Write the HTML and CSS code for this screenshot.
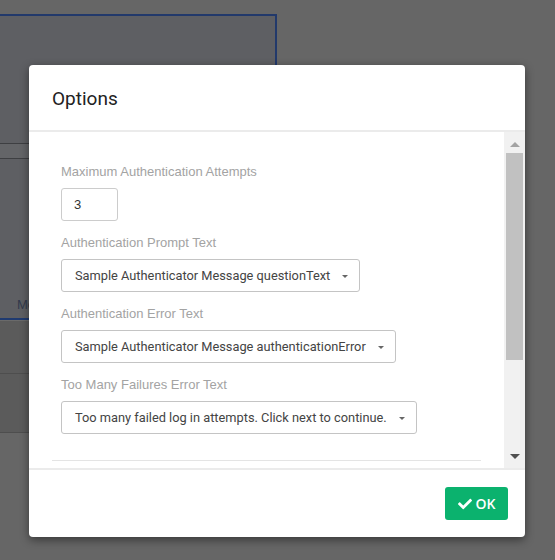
FILE: index.html
```html
<!DOCTYPE html>
<html>
<head>
<meta charset="utf-8">
<link rel="stylesheet" href="styles.css">
</head>
<body>
<div class="page">
  <div class="bg-panel">
    <div class="bg-gap"></div>
    <div class="bg-strip"></div>
    <div class="bg-fill"></div>
    <div class="bg-tab"><span class="bg-tab-label">Mo</span></div>
  </div>
  <div class="bg-rows">
    <div class="bg-row bg-row-a"></div>
    <div class="bg-row bg-row-b"></div>
  </div>
</div>

<div class="modal">
  <div class="modal-header">
    <h4 class="modal-title">Options</h4>
  </div>
  <div class="modal-body">
    <div class="body-content">
      <div class="fields">
        <div class="field">
          <div class="field-label">Maximum Authentication Attempts</div>
          <div class="num-input">3</div>
        </div>
        <div class="field">
          <div class="field-label">Authentication Prompt Text</div>
          <div class="select"><span class="select-text">Sample Authenticator Message questionText</span><span class="caret"></span></div>
        </div>
        <div class="field">
          <div class="field-label">Authentication Error Text</div>
          <div class="select"><span class="select-text">Sample Authenticator Message authenticationError</span><span class="caret"></span></div>
        </div>
        <div class="field">
          <div class="field-label">Too Many Failures Error Text</div>
          <div class="select"><span class="select-text">Too many failed log in attempts. Click next to continue.</span><span class="caret"></span></div>
        </div>
      </div>
      <div class="divider"></div>
    </div>
    <div class="scrollbar">
      <div class="sb-arrow sb-up"></div>
      <div class="sb-track"><div class="sb-thumb"></div></div>
      <div class="sb-arrow sb-down"></div>
    </div>
  </div>
  <div class="modal-footer">
    <button class="btn-ok">
      <svg class="check" viewBox="0 0 512 512" width="14" height="14"><path fill="#fff" d="M173.9 439.4l-166.4-166.4c-10-10-10-26.2 0-36.2l36.2-36.2c10-10 26.2-10 36.2 0L192 312.7 432.1 72.6c10-10 26.2-10 36.2 0l36.2 36.2c10 10 10 26.2 0 36.2L210.1 439.4c-10 10-26.2 10-36.2 0z"/></svg>
      <span>OK</span>
    </button>
  </div>
</div>
</body>
</html>
```

FILE: styles.css
```css
html, body {
  margin: 0;
  padding: 0;
}
body {
  background: #666666;
  width: 555px;
  height: 560px;
  overflow: hidden;
  position: relative;
  font-family: Roboto, "Open Sans", sans-serif;
}

.page {
  padding-top: 14px;
  width: 277px;
}
.bg-panel {
  width: 275px;
  height: 304px;
  background: #5e5f63;
  border-top: 2px solid #22396b;
  border-right: 2px solid #22396b;
  display: flex;
  flex-direction: column;
}
.bg-gap {
  height: 127px;
  border-bottom: 1px solid #3e3f42;
}
.bg-strip {
  height: 14px;
  background: #646568;
  border-bottom: 1px solid #3e3f42;
}
.bg-fill {
  flex: 1;
}
.bg-tab {
  height: 26px;
  border-bottom: 2px solid #1f3a70;
  padding-left: 17px;
  display: flex;
  align-items: center;
}
.bg-tab-label {
  font-family: "Liberation Sans", Arial, sans-serif;
  font-size: 13px;
  color: #333a4c;
  line-height: 16px;
}
.bg-rows {
  display: flex;
  flex-direction: column;
}
.bg-row {
  background: #5b5b5b;
  border-bottom: 1px solid #4e4e4e;
}
.bg-row-a {
  height: 52px;
  border-top: 1px solid #6a6a6a;
}
.bg-row-b {
  height: 58px;
}

.modal {
  position: absolute;
  left: 29px;
  top: 65px;
  width: 496px;
  height: 472px;
  background: #ffffff;
  border-radius: 4px;
  box-shadow: 0 3px 10px rgba(0, 0, 0, 0.45);
  display: flex;
  flex-direction: column;
  overflow: hidden;
}
.modal-header {
  height: 65px;
  border-bottom: 2px solid #ebebeb;
  padding-left: 23px;
  display: flex;
  align-items: center;
}
.modal-title {
  margin: 0;
  font-family: Roboto, sans-serif;
  font-size: 19px;
  font-weight: 400;
  color: #222222;
  padding-top: 2px;
}
.modal-body {
  height: 336px;
  display: flex;
  border-bottom: 2px solid #ebebeb;
}
.body-content {
  flex: 1;
  padding: 31px 23px 0 23px;
  overflow: hidden;
}
.fields {
  padding-left: 9px;
  display: flex;
  flex-direction: column;
  gap: 13px;
}
.field {
  display: flex;
  flex-direction: column;
  align-items: flex-start;
}
.field-label {
  font-family: "Liberation Sans", Arial, sans-serif;
  font-size: 13px;
  line-height: 18px;
  color: #a3a3a3;
  margin-bottom: 7px;
}
.num-input {
  width: 43px;
  height: 31px;
  border: 1px solid #cccccc;
  border-radius: 3px;
  padding-left: 12px;
  font-family: "Liberation Sans", Arial, sans-serif;
  font-size: 13px;
  line-height: 31px;
  color: #333333;
}
.select {
  height: 31px;
  border: 1px solid #c4c4c4;
  border-radius: 3px;
  padding: 0 11px 0 13px;
  display: flex;
  align-items: center;
  gap: 12px;
}
.select-text {
  font-family: Roboto, sans-serif;
  font-size: 12.8px;
  color: #444444;
  white-space: nowrap;
}
.caret {
  width: 0;
  height: 0;
  border-left: 3px solid transparent;
  border-right: 3px solid transparent;
  border-top: 3px solid #666666;
  margin-top: 1px;
}
.divider {
  margin-top: 26px;
  height: 1px;
  background: #e4e4e4;
}

.scrollbar {
  width: 21px;
  background: #f1f1f1;
  display: flex;
  flex-direction: column;
  align-items: center;
}
.sb-arrow {
  width: 0;
  height: 0;
  border-left: 5px solid transparent;
  border-right: 5px solid transparent;
}
.sb-up {
  border-bottom: 5px solid #a3a3a3;
  margin: 10px 0 6px;
}
.sb-down {
  border-top: 5px solid #505050;
  margin: 6px 0 9px;
}
.sb-track {
  flex: 1;
  width: 17px;
}
.sb-thumb {
  height: 207px;
  background: #c1c1c1;
}

.modal-footer {
  flex: 1;
  display: flex;
  justify-content: flex-end;
  align-items: flex-start;
  padding: 17px 17px 0 0;
}
.btn-ok {
  width: 63px;
  height: 33px;
  border: none;
  border-radius: 3px;
  background: #0bb26e;
  color: #ffffff;
  font-family: "Open Sans", sans-serif;
  font-size: 14px;
  font-weight: 600;
  display: flex;
  align-items: center;
  justify-content: center;
  gap: 4px;
  padding: 0;
}
.check {
  display: block;
}
```
